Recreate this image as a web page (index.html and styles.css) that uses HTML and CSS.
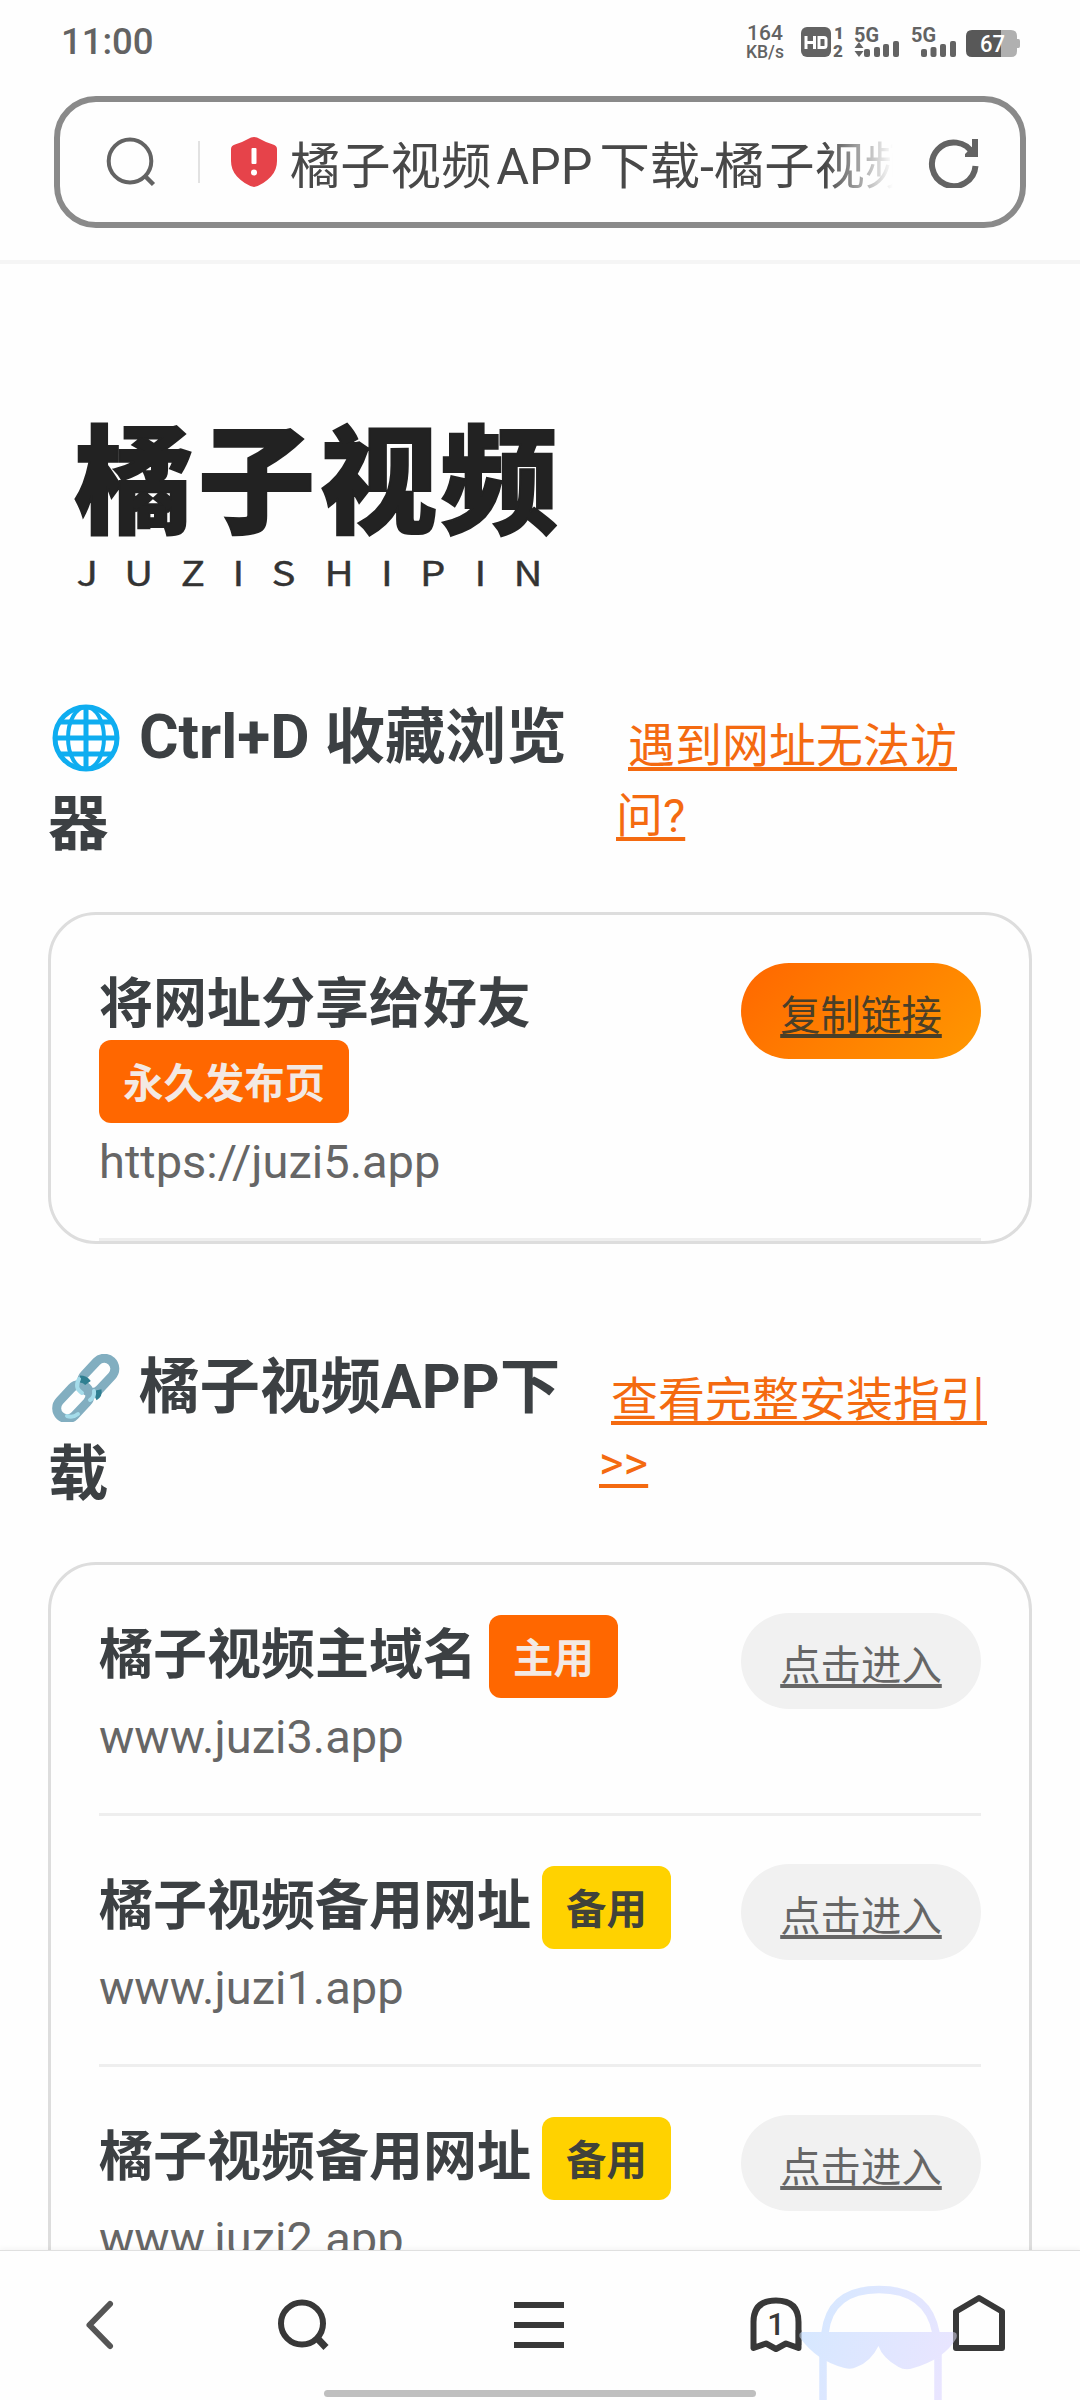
FILE: index.html
```html
<!DOCTYPE html>
<html lang="zh-CN">
<head>
<meta charset="utf-8">
<title>橘子视频APP下载</title>
<link rel="stylesheet" href="styles.css">
</head>
<body>
<div class="screen">
  <header class="status">
    <span class="clock">11:00</span>
    <div class="speed"><span class="speed-num">164</span><span class="speed-unit">KB/s</span></div>
    <svg class="status-icons" width="222" height="36" viewBox="800 24 222 36">
      <g fill="#636363">
        <rect x="801" y="27" width="30" height="30" rx="6"/>
        <g font-family="Roboto" font-weight="900" font-size="17"><text x="834" y="39">1</text><text x="833" y="56.500">2</text></g>
        <g font-family="Roboto" font-weight="700" font-size="21"><text x="854" y="42" textLength="25" lengthAdjust="spacingAndGlyphs">5G</text><text x="911" y="42" textLength="25" lengthAdjust="spacingAndGlyphs">5G</text></g>
        <path d="M859 42l4.500 6h-9zM859 57l4.500-6h-9z"/>
        <rect x="864" y="49" width="6" height="8" rx="2"/><rect x="874" y="47" width="6" height="10" rx="2"/><rect x="883" y="44" width="6" height="13" rx="2"/><rect x="893" y="41" width="6" height="16" rx="2"/>
        <rect x="921" y="49" width="6" height="8" rx="2"/><rect x="930.500" y="47" width="6" height="10" rx="2"/><rect x="940" y="44" width="6" height="13" rx="2"/><rect x="950" y="41" width="6" height="16" rx="2"/>
      </g>
      <path d="M806 36v13M814.500 36v13M806 42.500h8.500M819 36v13M817.500 37.500h6.500q2 0 2 2v6q0 2-2 2h-6.500" fill="none" stroke="#fff" stroke-width="3"/>
      <path d="M972 30h39q6 0 6 6v3h1.500q1.500 0 1.500 2v5q0 2-1.500 2H1017v3q0 6-6 6h-39z" fill="#b0b0b0"/>
      <path d="M1001 30v27h-29q-6 0-6-6V36q0-6 6-6z" fill="#585858"/>
      <text x="980" y="52" font-family="Roboto" font-size="24" font-weight="500" fill="#fff" textLength="25" lengthAdjust="spacingAndGlyphs">67</text>
    </svg>
  </header>
  <div class="address-wrap">
    <div class="address">
      <svg class="ico-search" width="50" height="52" viewBox="106 135 50 52" fill="none" stroke="#636363" stroke-width="4"><ellipse cx="130" cy="160" rx="21.300" ry="21.500"/><path d="M144.500 174.500l9 9" stroke-width="4.500"/></svg>
      <i class="sep"></i>
      <svg class="ico-shield" width="46" height="50" viewBox="0 0 46 50"><path d="M23 0q3 0 6 2 6 3.500 13 5.500 4 1.300 4 4.500v12q0 9-6 15.500-8 8.500-17 10.500-9-2-17-10.500Q0 33 0 24V12q0-3.200 4-4.500 7-2 13-5.500 3-2 6-2z" fill="#e6434a"/><rect x="20.500" y="11" width="5" height="16" rx="1" fill="#fff"/><circle cx="23" cy="35.500" r="3" fill="#fff"/></svg>
      <div class="page-title">橘子视频<span class="latin">APP</span>下载-橘子视频</div>
      <svg class="ico-reload" width="52" height="52" viewBox="928 136 52 52" fill="none" stroke="#636363" stroke-width="6"><path d="M973 154A21.800 21.800 0 1 0 975.500 166"/><path d="M978 139v18h-13v-3l7-7v-8z" fill="#636363" stroke="none"/></svg>
    </div>
  </div>
  <main class="page">
    <svg class="logo" width="500" height="180" viewBox="70 415 500 180">
      <g class="logo-cn"><text x="75" y="523.500">橘</text><text x="198" y="523.500">子</text><text x="320" y="523.500">视</text><text x="441" y="523.500">频</text></g>
      <text class="logo-en" transform="scale(1.18 1)" y="586.500" x="64.800 105.300 153.100 197 230.100 275 322.900 355.900 402.100 435.200">JUZISHIPIN</text>
    </svg>

    <section class="section">
      <div class="section-head">
        <h2 class="heading"><svg class="emoji" viewBox="0 0 68 68"><circle cx="34" cy="34" r="32" fill="#fff"/><g fill="none" stroke="#0fadf0" stroke-width="5"><circle cx="34" cy="34" r="31"/><ellipse cx="34" cy="34" rx="18" ry="31" stroke-width="4"/><path d="M34 2v64M2 34h64M9 18h50M9 50h50"/></g></svg><span>Ctrl+D 收藏浏览</span><br>器</h2>
        <a class="help help-a"><span class="indent">遇到网址无法访</span><br>问?</a>
      </div>
      <div class="card">
        <div class="row row-tall">
          <div class="info"><div class="name"><span class="name-line">将网址分享给好友</span><span class="tag tag-main">永久发布页</span></div><div class="url">https://juzi5.app</div></div>
          <a class="btn btn-copy">复制链接</a>
        </div>
      </div>
    </section>

    <section class="section section-b">
      <div class="section-head">
        <h2 class="heading"><svg class="emoji" viewBox="0 0 68 68" fill="none" stroke="#82aec0" stroke-width="9"><rect x="-10.500" y="-19" width="21" height="39" rx="10.500" transform="translate(46.500 21) rotate(43)"/><rect x="-10.500" y="-20" width="21" height="39" rx="10.500" transform="translate(21 48) rotate(43)"/><path d="M28 25q5 0 8 4M43 43q4-2 3-7" stroke="#2f7f91" stroke-width="7"/><path d="M27 25q-5 9 3 14M38 46q5-3 4-9M15 62q6 2 11-2" stroke="#a5dcea" stroke-width="4" stroke-linecap="round"/></svg><span>橘子视频APP下</span><br>载</h2>
        <a class="help help-b"><span class="indent">查看完整安装指引</span><br>&gt;&gt;</a>
      </div>
      <div class="card card-list">
        <div class="row">
          <div class="info"><div class="name"><span>橘子视频主域名</span><span class="tag tag-main">主用</span></div><div class="url">www.juzi3.app</div></div>
          <a class="btn">点击进入</a>
        </div>
        <div class="row">
          <div class="info"><div class="name"><span>橘子视频备用网址</span><span class="tag tag-alt">备用</span></div><div class="url">www.juzi1.app</div></div>
          <a class="btn">点击进入</a>
        </div>
        <div class="row">
          <div class="info"><div class="name"><span>橘子视频备用网址</span><span class="tag tag-alt">备用</span></div><div class="url">www.juzi2.app</div></div>
          <a class="btn">点击进入</a>
        </div>
      </div>
    </section>
  </main>
  <nav class="tabbar">
    <svg width="1080" height="149" viewBox="0 2251 1080 149" fill="none" stroke="#383838" stroke-width="6">
      <defs><linearGradient id="wm" gradientUnits="userSpaceOnUse" x1="800" y1="2310" x2="950" y2="2370"><stop offset="0" stop-color="#d5e8ff"/><stop offset="1" stop-color="#e9e5ff"/></linearGradient></defs>
      <path d="M110 2304L89.500 2325l20.500 21" stroke="#555" stroke-linecap="round" stroke-linejoin="round"/>
      <circle cx="302" cy="2323.500" r="21"/><path d="M317 2338l9 9.500" stroke-width="7"/>
      <path d="M514 2305h50M514 2325h50M514 2345h50"/>
      <path d="M753.500 2348v-26q0-21.500 22.500-21.500t22.500 21.500v26l-12.500-4.500-10 5.500-10-5.500z" stroke-linejoin="round"/>
      <text x="776" y="2335" class="tab-count">1</text>
      <path d="M956 2311.500l23-13.500 23 13.500V2348H956z" stroke-linejoin="round"/>
      <path d="M825 2333q5-43.500 54-43.500T936 2333M823 2354V2400M938 2354V2400" stroke="url(#wm)" stroke-width="7.500"/>
      <path d="M803 2332H953q5 0 3.500 6-12 21-43 30-8 3-15-1-16-9-20-21-8 16-22 21-5 3-12 1-28-7-45-31-1-5 3.500-5z" fill="url(#wm)" stroke="none"/>
      <path d="M798.500 2330v15M956 2330v15" stroke-opacity=".5"/>
      <path d="M327.500 2393.500h425" stroke="#bfbfbf" stroke-width="7" stroke-linecap="round"/>
    </svg>
  </nav>
</div>
</body>
</html>
```
FILE: styles.css
```css
* { box-sizing: border-box; }
body { margin: 0; background: #fefefe; font-family: Roboto, "Noto Sans CJK SC", sans-serif; }
svg { display: block; flex: none; }
.screen { width: 1080px; height: 2400px; overflow: hidden; display: flex; flex-direction: column; background: #fefefe; }

.status { height: 96px; flex: none; display: flex; align-items: flex-start; padding: 24px 58px 0 61px; color: #636363; }
.clock { font-size: 36.500px; font-weight: 500; line-height: 36px; margin: 0 auto 0 0; }
.speed { width: 40px; margin-right: 15px; display: flex; flex-direction: column; align-items: center; font-weight: 500; }
.speed-num { font-size: 21px; line-height: 18px; }
.speed-unit { font-size: 17.500px; line-height: 20px; }

.address-wrap { height: 168px; flex: none; padding: 0 54px; border-bottom: 4px solid #f5f5f5; }
.address { height: 132px; display: flex; align-items: center; border: 6px solid #8a8a8a; border-radius: 42px; padding: 0 40px 0 46px; }
.sep { width: 2px; height: 42px; background: #e2e2e2; margin-left: 42px; }
.ico-shield { margin-left: 31px; }
.page-title { flex: none; width: 603px; margin-left: 13px; padding-top: 9px; font-size: 50.300px; line-height: 72px; color: #484848; white-space: nowrap; overflow: hidden; -webkit-mask-image: linear-gradient(90deg, #000 535px, transparent 603px); mask-image: linear-gradient(90deg, #000 535px, transparent 603px); }
.latin { margin: 0 7px 0 5px; }
.ico-reload { margin-left: auto; }

.page { height: 1986px; flex: none; overflow: hidden; }
.logo { margin: 151px 0 0 70px; }
.logo-cn { font: 900 117px "Noto Sans CJK SC", sans-serif; fill: #222; stroke: #222; stroke-width: 2px; }
.logo-en { font: 400 34px "Noto Sans CJK SC", sans-serif; fill: #333; stroke: #333; stroke-width: .4px; }

.section { padding: 99px 48px 0; }
.section-b { padding-top: 100px; }
.section-head { display: flex; height: 218px; }
.heading { margin: 0; width: 551px; font-size: 60.500px; line-height: 87px; font-weight: 700; color: #3c4043; white-space: nowrap; }
.emoji { display: inline-block; width: 68px; height: 68px; margin: 0 19px 0 4px; vertical-align: -14px; }
.help { color: #f46a10; font-size: 47px; text-decoration: underline; text-decoration-thickness: 4px; text-underline-offset: 5px; white-space: nowrap; }
.help-a { margin: 17px 0 0 17px; line-height: 70px; }
.help-b { margin: 24px 0 0; line-height: 63px; }
.indent { margin-left: 12px; }

.card { border: 3px solid #ddd; border-radius: 48px; padding: 0 48px; height: 332px; }
.card-list { height: 1000px; }
.row { height: 251px; padding-top: 48px; border-bottom: 3px solid #eee; display: flex; justify-content: space-between; align-items: flex-start; }
.row-tall { height: 326px; }
.name { display: flex; align-items: center; font-size: 54px; font-weight: 700; line-height: 79px; color: #3c4043; gap: 12px; }
.name-line { display: block; height: 75px; line-height: 84px; }
.row-tall .name { display: block; }
.tag { display: block; width: max-content; padding: 0 24px; margin-top: 2px; border-radius: 12px; font-size: 40.400px; line-height: 89px; height: 83px; }
.tag-main { background: #ff6700; color: #f3e9e3; }
.tag-alt { background: #ffd200; color: #40423a; margin-left: -1px; }
.url { font-size: 47px; line-height: 66px; margin-top: 6px; color: #666; }
.btn { width: 240px; height: 96px; border-radius: 48px; background: #f1f1f1; color: #666; font-size: 40.400px; line-height: 108px; text-align: center; text-decoration: underline; text-decoration-thickness: 4px; text-underline-offset: 4px; }
.btn-copy { background: linear-gradient(135deg, #ff6700, #ff9800); color: #4a3f28; }

.tabbar { height: 150px; flex: none; background: #fefefe; border-top: 1px solid #e0e0e0; box-shadow: 0 -2px 5px rgba(0,0,0,.04); }
.tab-count { font: 500 31px Roboto, sans-serif; fill: #383838; stroke: none; text-anchor: middle; }
```
